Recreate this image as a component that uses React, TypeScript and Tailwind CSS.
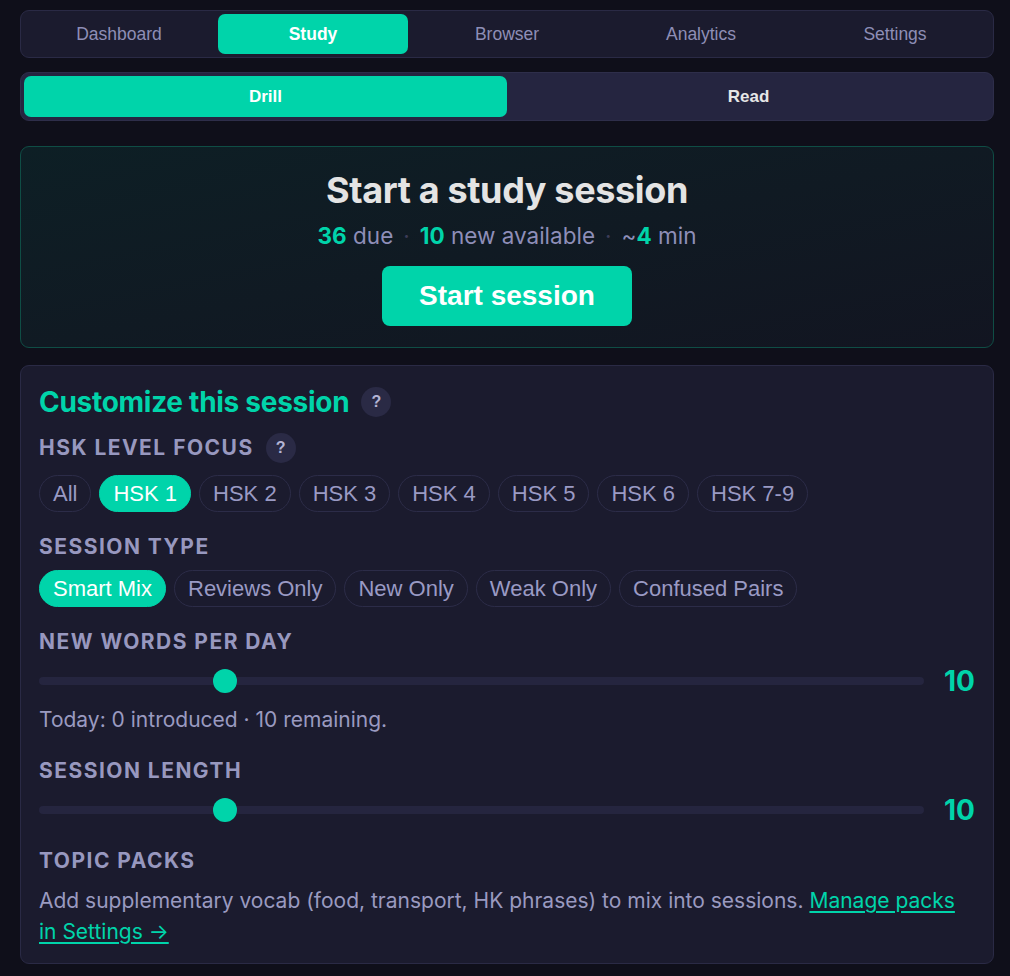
import { useState } from "react";

const TABS = ["Dashboard", "Study", "Browser", "Analytics", "Settings"];
const LEVELS = ["All", "HSK 1", "HSK 2", "HSK 3", "HSK 4", "HSK 5", "HSK 6", "HSK 7-9"];
const TYPES = ["Smart Mix", "Reviews Only", "New Only", "Weak Only", "Confused Pairs"];

function HelpDot() {
  return (
    <span className="flex h-[30px] w-[30px] shrink-0 items-center justify-center rounded-full bg-[#2a2a45] font-['Liberation_Sans',sans-serif] text-[16px] font-bold text-[#b4b4d4]">
      ?
    </span>
  );
}

function Label({ children, help }: { children: string; help?: boolean }) {
  return (
    <div className="flex items-center gap-[12px]">
      <h4 className="text-[21px] leading-[26px] font-bold uppercase tracking-[0.07em] text-[#9898bf]">
        {children}
      </h4>
      {help && <HelpDot />}
    </div>
  );
}

function Chips({
  items,
  value,
  onChange,
}: {
  items: string[];
  value: string;
  onChange: (v: string) => void;
}) {
  return (
    <div className="flex flex-wrap gap-[8px]">
      {items.map((item) => {
        const active = item === value;
        return (
          <button
            key={item}
            onClick={() => onChange(item)}
            className={`h-[37px] rounded-full border px-[13px] font-['Liberation_Sans',sans-serif] text-[22px] leading-none ${
              active
                ? "border-[#00d4aa] bg-[#00d4aa] text-white"
                : "border-[#2c2c48] bg-transparent text-[#9a9ac4]"
            }`}
          >
            {item}
          </button>
        );
      })}
    </div>
  );
}

function Slider({ value }: { value: number }) {
  return (
    <div className="flex h-[32px] items-center gap-[20px]">
      <div className="relative h-[8px] flex-1 rounded-full bg-[#25253f]">
        <div className="absolute top-1/2 left-[174px] h-[24px] w-[24px] -translate-y-1/2 rounded-full bg-[#00d4aa]" />
      </div>
      <span className="w-[31px] text-right text-[28px] leading-none font-bold text-[#00d4aa]">
        {value}
      </span>
    </div>
  );
}

export default function App() {
  const [tab, setTab] = useState("Study");
  const [mode, setMode] = useState("Drill");
  const [level, setLevel] = useState("HSK 1");
  const [type, setType] = useState("Smart Mix");

  return (
    <div className="min-h-screen bg-[#0f0f1a] pt-[10px] pr-[16px] pb-[12px] pl-[20px] font-['Inter',sans-serif]">
      {/* Main nav */}
      <nav className="grid h-[48px] grid-cols-5 gap-[4px] rounded-[9px] border border-[#2a2a45] bg-[#1b1b2e] p-[3px]">
        {TABS.map((t) => (
          <button
            key={t}
            onClick={() => setTab(t)}
            className={`rounded-[7px] font-['Liberation_Sans',sans-serif] text-[17.5px] ${
              t === tab ? "bg-[#00d4aa] font-bold text-white" : "text-[#8e8eb6]"
            }`}
          >
            {t}
          </button>
        ))}
      </nav>

      {/* Sub mode */}
      <div className="mt-[14px] grid h-[49px] grid-cols-2 rounded-[9px] border border-[#2e2e4a] bg-[#252540] p-[3px]">
        {["Drill", "Read"].map((m) => (
          <button
            key={m}
            onClick={() => setMode(m)}
            className={`rounded-[7px] font-['Liberation_Sans',sans-serif] text-[17px] font-bold ${
              m === mode ? "bg-[#00d4aa] text-white" : "text-[#e6e6e6]"
            }`}
          >
            {m}
          </button>
        ))}
      </div>

      {/* Start hero */}
      <section className="mt-[25px] flex flex-col items-center rounded-[9px] border border-[#0f4d45] bg-gradient-to-br from-[#0d1f25] to-[#121521] pt-[21px] pb-[21px]">
        <h2 className="text-[36px] leading-[44px] font-bold tracking-[-0.01em] text-[#e4e4e4]">
          Start a study session
        </h2>
        <p className="mt-[9px] text-[22.5px] leading-[30px] text-[#8e8eb8]">
          <b className="font-bold text-[#00d4aa]">36</b> due
          <span className="mx-[10px] text-[#3c3c58]">·</span>
          <b className="font-bold text-[#00d4aa]">10</b> new available
          <span className="mx-[10px] text-[#3c3c58]">·</span>~
          <b className="font-bold text-[#00d4aa]">4</b> min
        </p>
        <button className="mt-[15px] h-[60px] w-[250px] rounded-[8px] bg-[#00d4aa] font-['Liberation_Sans',sans-serif] text-[28px] font-bold text-white">
          Start session
        </button>
      </section>

      {/* Customize */}
      <section className="mt-[17px] rounded-[9px] border border-[#2a2a45] bg-[#1b1b2e] px-[18px] pt-[17px] pb-[16px]">
        <div className="flex items-center gap-[12px]">
          <h3 className="text-[28px] leading-[38px] font-bold tracking-[-0.01em] text-[#00d4aa]">
            Customize this session
          </h3>
          <HelpDot />
        </div>

        <div className="mt-[12px]">
          <Label help>HSK Level Focus</Label>
          <div className="mt-[12px]">
            <Chips items={LEVELS} value={level} onChange={setLevel} />
          </div>
        </div>

        <div className="mt-[22px]">
          <Label>Session Type</Label>
          <div className="mt-[10px]">
            <Chips items={TYPES} value={type} onChange={setType} />
          </div>
        </div>

        <div className="mt-[22px]">
          <Label>New Words Per Day</Label>
          <div className="mt-[10px]">
            <Slider value={10} />
          </div>
          <p className="mt-[9px] text-[21px] leading-[28px] text-[#9a9ac0]">
            Today: 0 introduced · 10 remaining.
          </p>
        </div>

        <div className="mt-[24px]">
          <Label>Session Length</Label>
          <div className="mt-[10px]">
            <Slider value={10} />
          </div>
        </div>

        <div className="mt-[22px]">
          <Label>Topic Packs</Label>
          <p className="mt-[11px] pr-[12px] text-[21px] leading-[31px] text-[#9a9ac0]">
            Add supplementary vocab (food, transport, HK phrases) to mix into sessions.{" "}
            <a href="#" className="text-[#00d4aa] underline underline-offset-[3px]">
              Manage packs in Settings →
            </a>
          </p>
        </div>
      </section>
    </div>
  );
}
